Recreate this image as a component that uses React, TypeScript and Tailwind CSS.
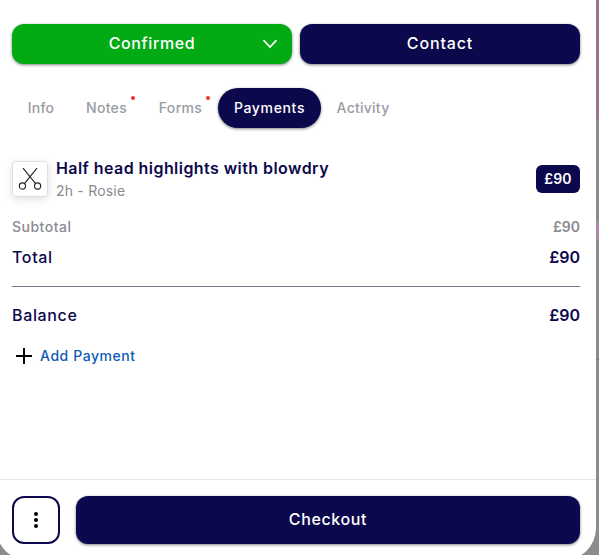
type Tab = { label: string; width: string; spacing: string; dot?: boolean };

const tabs: Tab[] = [
  { label: "Info", width: "w-[58px]", spacing: "tracking-[0.2px]" },
  { label: "Notes", width: "w-[73px]", spacing: "tracking-[0.3px]", dot: true },
  { label: "Forms", width: "w-[75px]", spacing: "tracking-[0.35px]", dot: true },
  { label: "Payments", width: "w-[103px]", spacing: "tracking-[0.65px]" },
  { label: "Activity", width: "w-[84px]", spacing: "tracking-[0.25px]" },
];

function ScissorsIcon() {
  return (
    <svg width="24" height="24" viewBox="0 0 24 24" fill="none" stroke="#222" strokeWidth="1.1">
      <circle cx="4.4" cy="19" r="3.1" />
      <circle cx="19.6" cy="19" r="3.1" />
      <path d="M5 1.2 17.6 16.7M19 1.2 6.4 16.7" />
    </svg>
  );
}

function Header() {
  return (
    <div className="flex gap-2 text-base font-medium text-white">
      <button className="relative flex h-10 w-[280px] items-center justify-center rounded-xl bg-[#02ab13] pb-0.5 shadow-[0_1px_3px_rgba(0,0,0,0.5)]">
        <span className="tracking-[0.6px]">Confirmed</span>
        <svg className="absolute right-[15px] top-[15px]" width="14" height="10" viewBox="0 0 14 10" fill="none" stroke="white" strokeWidth="1.7">
          <path d="M1 1.6 7 8 13 1.6" strokeLinecap="round" />
        </svg>
      </button>
      <button className="flex h-10 w-[280px] items-center justify-center rounded-xl bg-[#0c084c] pb-0.5 shadow-[0_1px_3px_rgba(0,0,0,0.5)]">
        <span className="tracking-[0.85px]">Contact</span>
      </button>
    </div>
  );
}

function Tabs({ active }: { active: string }) {
  return (
    <div className="mt-6 flex text-sm font-medium">
      {tabs.map((t) => (
        <button
          key={t.label}
          className={`relative flex h-10 items-center justify-center rounded-full ${t.width} ${
            t.label === active ? "bg-[#0c084c] text-white shadow-[0_1px_3px_rgba(0,0,0,0.5)]" : "text-[#9a9ba3]"
          }`}
        >
          <span className={t.spacing}>{t.label}</span>
          {t.dot && <span className="absolute right-2 top-2 size-1 rounded-full bg-[#f52d2d]" />}
        </button>
      ))}
    </div>
  );
}

export default function App() {
  return (
    <div className="relative flex h-[555px] w-[599px] overflow-hidden bg-[#8c8c8c] font-['Inter',sans-serif] text-[#0c084c]">
      <div className="absolute right-0 top-0 h-[119px] w-4 bg-[#937591]" />
      <div className="absolute right-0 top-[221px] h-[18px] w-4 bg-[#a889a8]" />
      <div className="absolute right-0 top-[359px] h-px w-4 bg-[#777]" />

      <main className="relative -ml-1 flex h-[560px] w-[600px] shrink-0 flex-col rounded-b-[32px] bg-white">
        <div className="flex h-[479px] flex-col px-4 pt-6">
          <Header />
          <Tabs active="Payments" />

          <div className="mt-[30px] flex h-[44px] items-center">
            <div className="-mt-0.5 flex size-9 shrink-0 items-center justify-center rounded border border-[#dedede] shadow-[0_2px_8px_rgba(0,0,0,0.13)]">
              <ScissorsIcon />
            </div>
            <div className="-mt-[3px] ml-2 flex-1">
              <div className="text-base leading-[23px] font-semibold tracking-[0.44px] whitespace-nowrap">Half head highlights with blowdry</div>
              <div className="text-sm leading-[21px] tracking-[0.2px] text-[#898a91]">2h - Rosie</div>
            </div>
            <div className="-mt-0.5 flex h-7 w-11 items-center justify-center rounded-md bg-[#0c084c] text-sm font-semibold text-white">
              <span className="tracking-[0.2px]">£90</span>
            </div>
          </div>

          <div className="mt-[15px] flex h-5 items-center justify-between text-sm font-medium text-[#898a91]">
            <span className="tracking-[0.5px]">Subtotal</span>
            <span className="font-semibold">£90</span>
          </div>
          <div className="mt-2 flex h-6 items-center justify-between text-base font-medium">
            <span className="tracking-[0.65px]">Total</span>
            <span className="font-semibold">£90</span>
          </div>
          <div className="mt-[17px] h-px bg-[#777988]" />
          <div className="mt-4 flex h-6 items-center justify-between text-base font-medium">
            <span className="tracking-[0.65px]">Balance</span>
            <span className="font-semibold">£90</span>
          </div>
          <button className="mt-[17px] flex h-6 items-center gap-1 text-sm font-medium text-[#0d5bb5]">
            <svg width="24" height="24" viewBox="0 0 24 24" stroke="black" strokeWidth="2">
              <path d="M4 12H20M12 4V20" />
            </svg>
            <span className="tracking-[0.57px]">Add Payment</span>
          </button>
        </div>

        <footer className="flex gap-4 border-t border-[#e5e5e5] px-4 pt-4">
          <button className="flex size-12 items-center justify-center rounded-xl border-2 border-[#0c084c]">
            <svg width="4" height="16" viewBox="0 0 4 16" fill="black">
              <circle cx="2" cy="2" r="2" />
              <circle cx="2" cy="8" r="2" />
              <circle cx="2" cy="14" r="2" />
            </svg>
          </button>
          <button className="flex h-12 w-[504px] items-center justify-center rounded-xl bg-[#0c084c] pb-0.5 text-base font-medium text-white shadow-[0_1px_3px_rgba(0,0,0,0.5)]">
            <span className="tracking-[0.62px]">Checkout</span>
          </button>
        </footer>
      </main>
    </div>
  );
}
